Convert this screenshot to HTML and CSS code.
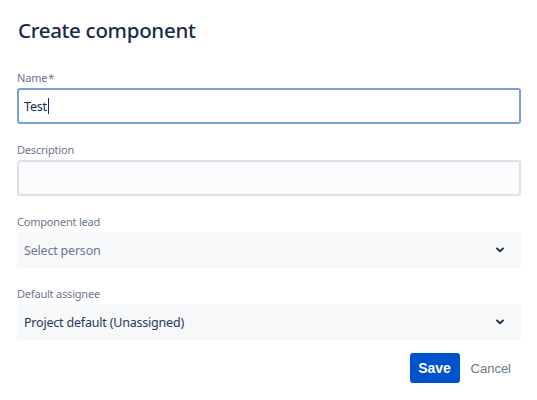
FILE: index.html
```html
<!DOCTYPE html>
<html>
<head>
<meta charset="utf-8">
<link rel="stylesheet" href="styles.css">
</head>
<body>
<div class="dialog">
  <h1 class="title">Create component</h1>
  <div class="field">
    <div class="label">Name<span class="req">*</span></div>
    <div class="input focused"><span class="value">Test</span><span class="caret"></span></div>
  </div>
  <div class="field">
    <div class="label">Description</div>
    <div class="input"></div>
  </div>
  <div class="field">
    <div class="label">Component lead</div>
    <div class="select"><span class="placeholder">Select person</span>
      <svg class="chev" width="10" height="8" viewBox="0 0 10 8"><path d="M2 2.5 L5 5.2 L8 2.5" fill="none" stroke="#253858" stroke-width="2" stroke-linecap="round" stroke-linejoin="round"/></svg>
    </div>
  </div>
  <div class="field">
    <div class="label">Default assignee</div>
    <div class="select"><span class="selected">Project default (Unassigned)</span>
      <svg class="chev" width="10" height="8" viewBox="0 0 10 8"><path d="M2 2.5 L5 5.2 L8 2.5" fill="none" stroke="#253858" stroke-width="2" stroke-linecap="round" stroke-linejoin="round"/></svg>
    </div>
  </div>
  <div class="actions">
    <button class="btn primary">Save</button>
    <button class="btn link">Cancel</button>
  </div>
</div>
</body>
</html>
```
FILE: styles.css
```css
html, body { margin: 0; padding: 0; background: #fff; }
body { font-family: "Noto Sans", "Open Sans", sans-serif; color: #172b4d; }
.dialog { padding: 16px 16px 0 17px; }
.title { margin: 0 0 24px 1px; font-size: 20.5px; line-height: 28px; font-weight: 500; color: #172b4d; letter-spacing: -0.3px; }
.field { margin-bottom: 16px; }
.label { font-size: 11px; line-height: 16px; color: #6b778c; padding-top: 2px; margin-bottom: 2px; letter-spacing: -0.2px; }
.req { color: #6b778c; margin-left: 1px; }
.input { box-sizing: border-box; height: 36px; border: 2px solid #dfe1e6; background: #fafbfc; border-radius: 3px; padding: 0 5px; display: flex; align-items: center; font-size: 12.5px; letter-spacing: -0.2px; }
.input.focused { border-color: #78a2d6; background: #fff; }
.value { color: #172b4d; }
.caret { width: 1px; height: 16px; background: #172b4d; margin-left: 1px; }
.select { box-sizing: border-box; height: 36px; background: #f7f8fa; border-radius: 3px; padding: 0 16px 0 7px; display: flex; align-items: center; justify-content: space-between; font-size: 12.5px; letter-spacing: -0.2px; }
.placeholder { color: #6b778c; }
.selected { color: #253858; }
.chev { display: block; }
.actions { display: flex; justify-content: flex-end; gap: 1px; margin-top: -4px; }
.btn { font-family: "Liberation Sans", Arial, sans-serif; font-size: 14px; height: 30px; border: none; border-radius: 3px; padding: 0 10px; cursor: pointer; }
.btn.primary { background: #0052cc; color: #fff; font-weight: bold; width: 50px; padding: 0; margin-top: 1px; }
.btn.link { background: transparent; color: #6b778c; font-size: 13px; margin-top: 1px; }
```
